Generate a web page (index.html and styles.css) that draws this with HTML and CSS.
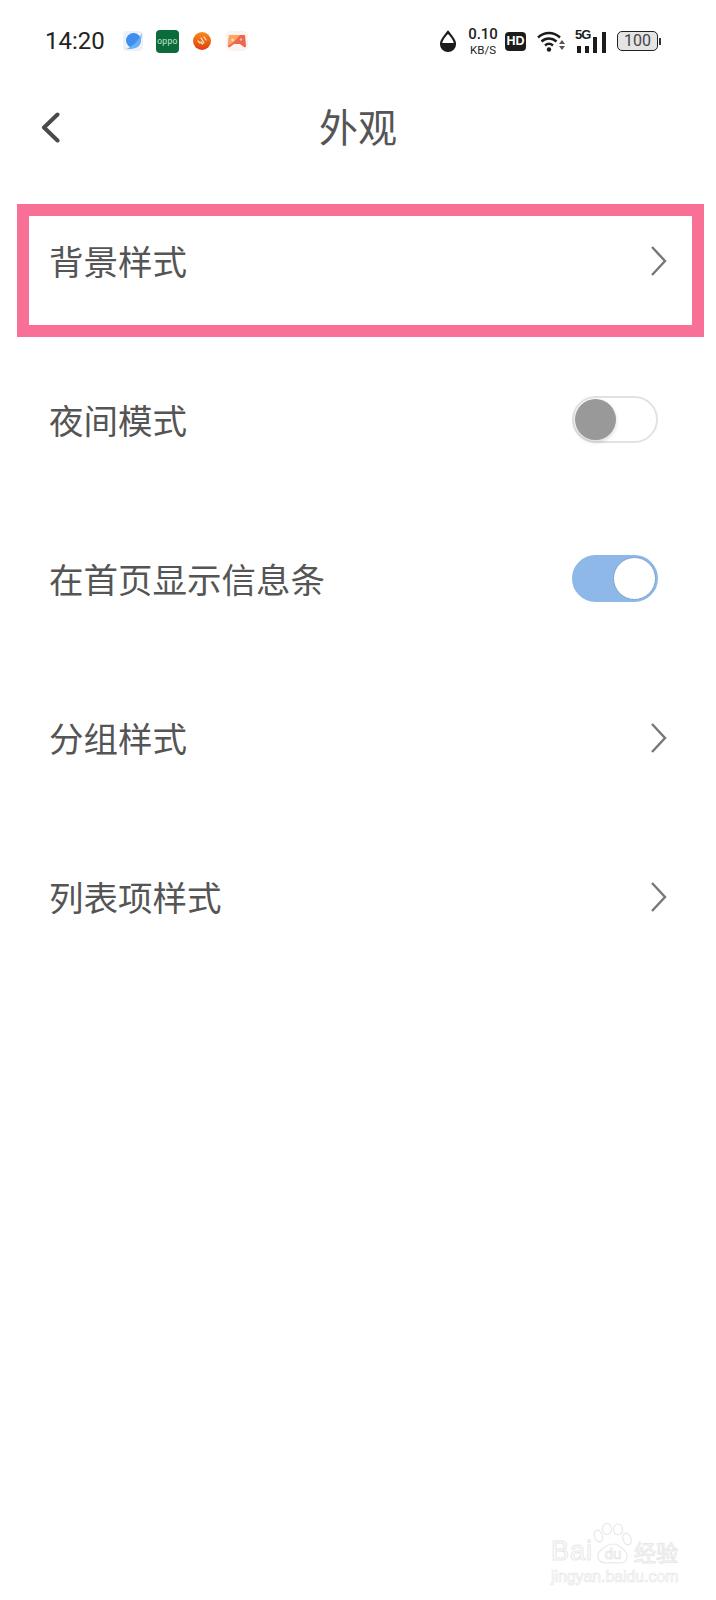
FILE: index.html
```html
<!DOCTYPE html>
<html lang="zh-CN">
<head>
  <meta charset="UTF-8" />
  <meta name="viewport" content="width=device-width, initial-scale=1.0"/>
  <title>外观</title>
  <link rel="stylesheet" href="styles.css">
</head>
<body>
  <div class="statusbar">
    <span class="time">14:20</span>
    <div class="notif">
      <svg class="ic-browser" width="20" height="20" viewBox="0 0 20 20">
        <rect x="0" y="0" width="20" height="20" rx="4" fill="#eef2f8"/>
        <circle cx="10.500" cy="9.500" r="7.500" fill="#3f8ff0"/>
        <path d="M1 19c3-1 6-3 9-5 3-2 6-6 8-10l1-2-1 7c-1 5-5 9-10 9H3z" fill="#69b2f6"/>
      </svg>
      <div class="ic-oppo">oppo</div>
      <svg class="ic-round" width="18" height="18" viewBox="0 0 18 18">
        <defs>
          <linearGradient id="orange" x1="0" y1="0" x2="0" y2="1">
            <stop offset="0" stop-color="#f58a1c"/>
            <stop offset="1" stop-color="#de3f0e"/>
          </linearGradient>
        </defs>
        <circle cx="9" cy="9" r="9" fill="url(#orange)"/>
        <path d="M5 9l2 2M8 6l3 5M11 5l2 3M8 10l1.500 2" fill="none" stroke="#ffe3c4" stroke-width="1.300" stroke-linecap="round"/>
      </svg>
      <svg class="ic-game" width="22" height="22" viewBox="0 0 22 22">
        <rect x="0" y="1" width="22" height="20" rx="5" fill="#fbf3ef"/>
        <path d="M3 5h16l1 11c0 1-1 2-2 1l-4-3H8l-4 3c-1 1-2 0-2-1z" fill="#ee6650"/>
        <path d="M3 5h11l-5 6-7 5z" fill="#f9a85e"/>
        <circle cx="6.500" cy="10" r="1.200" fill="#fde3c8"/>
        <circle cx="15" cy="9.500" r="1.200" fill="#f9b6a6"/>
      </svg>
    </div>
    <div class="sys">
      <svg class="ic-drop" width="18" height="23" viewBox="0 0 18 23">
        <path d="M9 2c3 4 7 7.500 7 12a7 7 0 0 1-14 0c0-4.500 4-8 7-12z" fill="#fff" stroke="#1c1c1c" stroke-width="2.200"/>
        <path d="M2 13h14v1a7 7 0 0 1-14 0z" fill="#1c1c1c"/>
      </svg>
      <div class="speed"><span class="speed-num">0.10</span><span class="speed-unit">KB/S</span></div>
      <div class="hd">HD</div>
      <svg class="ic-wifi" width="29" height="22" viewBox="0 0 29 22">
        <path d="M1 7.500c6.500-6 15.500-6 22 0M4.500 11.500c4.500-4 10.500-4 15 0M8 15.500c2.500-2.200 5.500-2.200 8 0" fill="none" stroke="#1c1c1c" stroke-width="2.400"/>
        <circle cx="12" cy="19.500" r="2.200" fill="#1c1c1c"/>
        <path d="M25 10l3 4h-6zM25 20l-3-4h6z" fill="#555"/>
      </svg>
      <div class="signal">
        <span class="five-g">5G</span>
        <svg width="32" height="21" viewBox="0 0 32 21">
          <rect x="2" y="14" width="4" height="7" fill="#1c1c1c"/>
          <rect x="10" y="14" width="4" height="7" fill="#1c1c1c"/>
          <rect x="18" y="5" width="4" height="16" fill="#1c1c1c"/>
          <rect x="27" y="0" width="4" height="21" fill="#1c1c1c"/>
        </svg>
      </div>
      <div class="battery"><div class="battery-body">100</div><div class="battery-tip"></div></div>
    </div>
  </div>

  <div class="titlebar">
    <svg class="back" width="19" height="31" viewBox="0 0 19 31">
      <path d="M16.500 2.500L3 15.500l13.500 13" fill="none" stroke="#4a4a4a" stroke-width="4" stroke-linecap="round" stroke-linejoin="round"/>
    </svg>
    <h1>外观</h1>
  </div>

  <div class="list">
    <div class="row">
      <div class="marker"></div>
      <span>背景样式</span>
      <svg class="chevron" width="18" height="32" viewBox="0 0 18 32"><path d="M2 2l13 14L2 30" fill="none" stroke="#777" stroke-width="2.400"/></svg>
    </div>
    <div class="row">
      <span>夜间模式</span>
      <div class="switch"><div class="knob"></div></div>
    </div>
    <div class="row">
      <span>在首页显示信息条</span>
      <div class="switch on"><div class="knob"></div></div>
    </div>
    <div class="row">
      <span>分组样式</span>
      <svg class="chevron" width="18" height="32" viewBox="0 0 18 32"><path d="M2 2l13 14L2 30" fill="none" stroke="#777" stroke-width="2.400"/></svg>
    </div>
    <div class="row">
      <span>列表项样式</span>
      <svg class="chevron" width="18" height="32" viewBox="0 0 18 32"><path d="M2 2l13 14L2 30" fill="none" stroke="#777" stroke-width="2.400"/></svg>
    </div>
  </div>

  <!-- watermark sits over the empty bottom corner -->
  <div class="watermark">
    <div class="wm-top">
      <span class="wm-bai">Bai</span>
      <svg class="wm-paw" width="40" height="41" viewBox="0 0 40 41">
        <g fill="#fff" stroke="#e8e8e8" stroke-width="1.200">
          <ellipse cx="5.500" cy="13" rx="4" ry="6" transform="rotate(-20 5.500 13)"/>
          <ellipse cx="14" cy="6" rx="4.500" ry="5.500"/>
          <ellipse cx="25" cy="6.500" rx="4.500" ry="5.500"/>
          <ellipse cx="34" cy="16" rx="4" ry="6" transform="rotate(-20 34 16)"/>
          <path d="M20 21c5 0 8 3 12 7 4 5 2 12-5 12-4 0-9-1-14 0-7 0-10-6-7-11 4-4 8-8 14-8z"/>
        </g>
        <text x="20" y="36" class="wm-du">du</text>
      </svg>
      <span class="wm-cn">经验</span>
    </div>
    <div class="wm-url">jingyan.baidu.com</div>
  </div>
</body>
</html>
```

FILE: styles.css
```css
* {
  box-sizing: border-box;
}
html, body {
  margin: 0;
  height: 1600px;
  overflow: hidden;
}
body {
  position: relative;
  background-color: #fff;
  font-family: "Noto Sans CJK SC", "Noto Sans", sans-serif;
  color: #555;
}
.statusbar {
  height: 82px;
  display: flex;
  align-items: center;
  padding-left: 45px;
}
.time {
  font-family: Roboto, sans-serif;
  font-size: 24px;
  color: #222;
  width: 78px;
}
.notif {
  display: flex;
  align-items: center;
}
.ic-browser {
  margin-right: 13px;
}
.ic-oppo {
  width: 23px;
  height: 23px;
  margin-right: 14px;
  border-radius: 4px;
  background-color: #0b6b3a;
  color: #cfe8d8;
  font-family: "Liberation Sans", sans-serif;
  font-size: 8.500px;
  letter-spacing: 0.400px;
  line-height: 23px;
  text-align: center;
}
.ic-round {
  margin-right: 15px;
}
.sys {
  display: flex;
  align-items: center;
  margin-left: 191px;
}
.speed {
  display: flex;
  flex-direction: column;
  align-items: center;
  width: 30px;
  height: 30px;
  justify-content: center;
  margin-left: 11px;
  font-family: Roboto, sans-serif;
  color: #222;
}
.speed-num {
  font-size: 15px;
  font-weight: 500;
  line-height: 18px;
}
.speed-unit {
  font-size: 11.500px;
  line-height: 14px;
}
.hd {
  width: 21px;
  height: 19px;
  margin-left: 7px;
  border-radius: 4px;
  background-color: #1c1c1c;
  color: #fff;
  font-family: "Liberation Sans", sans-serif;
  font-size: 12.500px;
  font-weight: bold;
  line-height: 19px;
  text-align: center;
}
.ic-wifi {
  margin-left: 11px;
}
.signal {
  position: relative;
  width: 32px;
  height: 23px;
  margin-left: 9px;
  display: flex;
  align-items: flex-end;
}
.five-g {
  position: absolute;
  left: 0;
  top: -2px;
  font-family: "Liberation Sans", sans-serif;
  font-size: 13px;
  font-weight: bold;
  letter-spacing: -1px;
  color: #1c1c1c;
  line-height: 14px;
}
.battery {
  display: flex;
  align-items: center;
  margin-left: 10px;
}
.battery-body {
  width: 41px;
  height: 20px;
  border: 1.500px solid #222;
  border-radius: 5px;
  background-color: #e4e4e4;
  font-family: Roboto, sans-serif;
  font-size: 16px;
  line-height: 17px;
  text-align: center;
  color: #444;
}
.battery-tip {
  width: 2px;
  height: 7px;
  margin-left: 1px;
  background-color: #333;
}
.titlebar {
  height: 92px;
  padding-bottom: 6px;
  position: relative;
  display: flex;
  align-items: center;
  justify-content: center;
}
.titlebar h1 {
  margin: 0;
  font-size: 39px;
  font-weight: 400;
  color: #555;
}
.back {
  position: absolute;
  left: 41px;
  top: 30px;
}
.list {
  margin-top: 7px;
}
.row {
  position: relative;
  height: 159px;
  display: flex;
  align-items: center;
  justify-content: space-between;
  padding: 0 48px 0 49px;
  font-size: 34.500px;
}
.row span {
  padding-bottom: 2px;
}
.marker {
  position: absolute;
  left: 17px;
  top: 23px;
  width: 687px;
  height: 133px;
  border: 12px solid #f87096;
}
.switch {
  position: relative;
  width: 86px;
  height: 47px;
  margin-right: 10px;
  border: 2px solid #e2e2e2;
  border-radius: 24px;
  background-color: #fff;
}
.knob {
  position: absolute;
  left: 1px;
  top: 1px;
  width: 41px;
  height: 41px;
  border-radius: 50%;
  background-color: #999;
  box-shadow: 0 2px 4px rgba(0, 0, 0, 0.15);
}
.switch.on {
  border-color: #8db8e8;
  background-color: #8db8e8;
}
.switch.on .knob {
  left: auto;
  right: 0;
  top: 0;
  width: 43px;
  height: 43px;
  background-color: #fff;
  border: 1px solid #7fa3cc;
  box-shadow: none;
}
.watermark {
  position: absolute;
  left: 551px;
  top: 1523px;
  width: 130px;
  color: #fff;
  -webkit-text-stroke: 1px #e8e8e8;
  font-family: "Liberation Sans", sans-serif;
}
.wm-top {
  display: flex;
  align-items: flex-end;
  height: 41px;
}
.wm-bai {
  font-size: 27px;
  line-height: 25px;
  width: 42px;
  letter-spacing: 1px;
}
.wm-paw {
  flex: none;
}
.wm-du {
  font-size: 15px;
  text-anchor: middle;
  fill: #fff;
  stroke: #e4e4e4;
  stroke-width: 0.700;
}
.wm-cn {
  margin-left: 1px;
  font-family: "Noto Sans CJK SC", sans-serif;
  font-size: 22px;
  line-height: 26px;
  white-space: nowrap;
}
.wm-url {
  margin-top: 4px;
  font-size: 15.800px;
  line-height: 18px;
  white-space: nowrap;
  -webkit-text-stroke: 0.700px #e8e8e8;
}
```
